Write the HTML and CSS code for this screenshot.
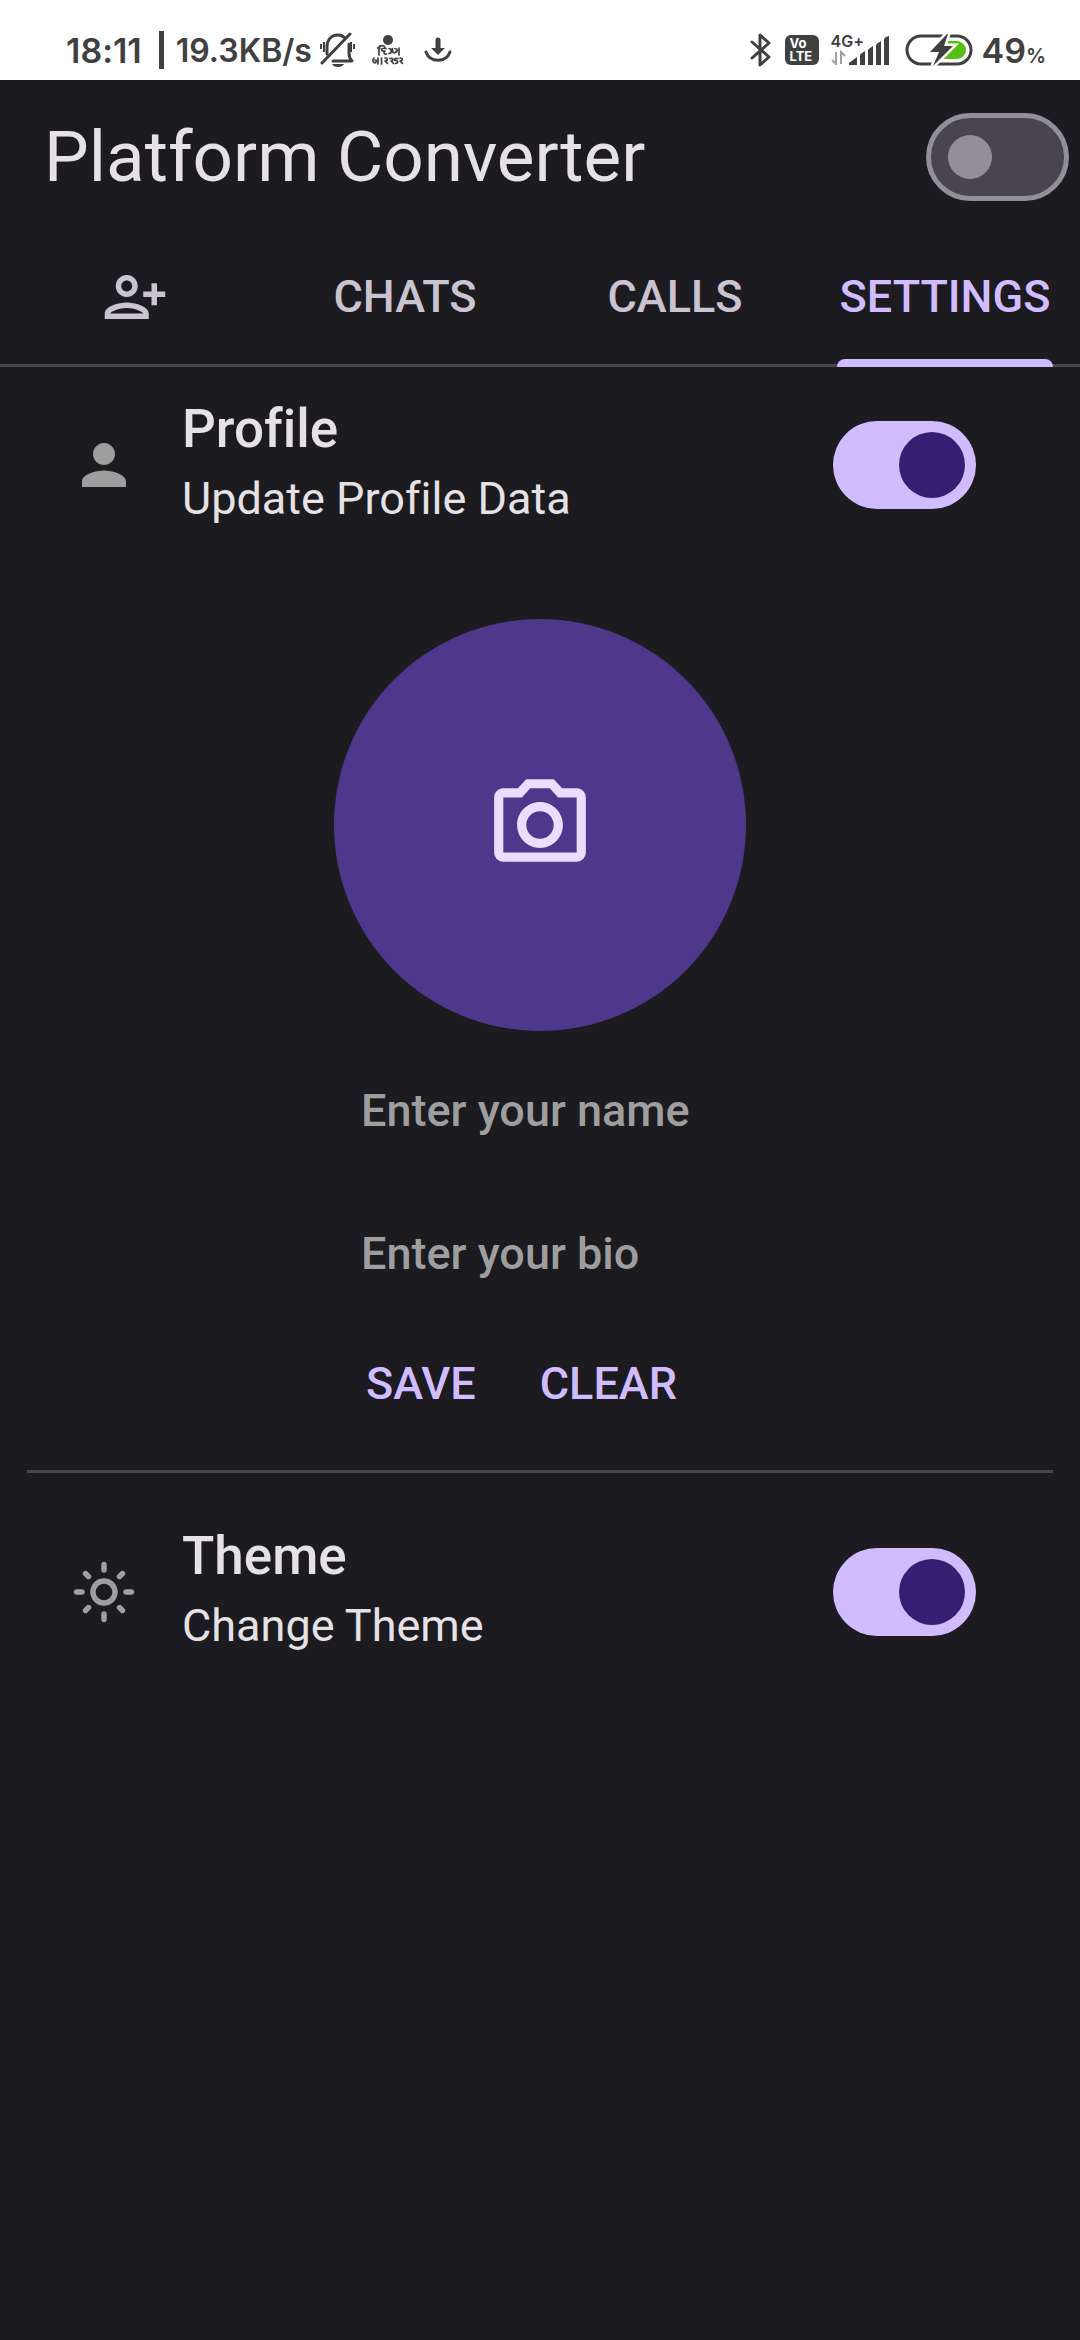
FILE: index.html
```html
<!DOCTYPE html>
<html lang="en">
<head>
<meta charset="utf-8">
<meta name="viewport" content="width=device-width, initial-scale=1">
<title>Platform Converter</title>
<link rel="stylesheet" href="styles.css">
</head>
<body>
<div class="status">
  <div class="status-group">
    <span class="clock">18:11</span>
    <span class="status-bar"></span>
    <span class="speed">19.3KB/s</span>
    <svg class="icon-bell" viewBox="0 0 36 36" width="36" height="36" aria-hidden="true">
      <g fill="none" stroke="#404040" stroke-width="3" stroke-linecap="round" stroke-linejoin="round">
        <path d="M7 22V15C7 8 11 3 18 3c3 0 5 1 7 3"/>
        <path d="M29 12v9c0 4 1 6 3 8H13"/>
        <path d="M30 2L2 31"/>
      </g>
      <path d="M12 32h12c-1 2-3 3-6 3s-5-1-6-3z" fill="#404040"/>
      <path d="M1 12v5M4 10v10M31 10v10M34 12v5" stroke="#404040" stroke-width="2"/>
    </svg>
    <svg class="icon-news" viewBox="0 0 32 32" width="32" height="32" aria-hidden="true">
      <circle cx="16" cy="6" r="5" fill="#404040"/>
      <g fill="none" stroke="#404040" stroke-width="1.7" stroke-linecap="round" stroke-linejoin="round">
        <path d="M7 21v-7c0-3 5-3 6-.5M5.500 14H8M14 14.500h-3c-2 0-2 2.500 0 2.500h2c-2 1-1 3.500 1.500 3M17 14.500c3 0 3 5 0 5M20.500 14.500v2c0 3 3 3 4 .5M23 14.500c2 0 3 2 1.500 3.500M27 14v7"/>
        <path d="M2 24c-2 2-1 5 1 5 1.500 0 1.500-3 0-3M6 24v6M3.500 26.500H6M9.500 24v6M13 24c3 0 3 3 0 3l2.500 2.500M18 24.500c4-1 3 2.500 1 2.500M19.500 27l2 2.500M26 24.500h-3c-1 2 0 2 1.500 2s1.500 3-1 3M28 24c3 0 3 3 0 3l2.500 2.500"/>
      </g>
    </svg>
    <svg class="icon-download" viewBox="0 0 28 26" width="28" height="26" aria-hidden="true">
      <path d="M14 3v9" stroke="#404040" stroke-width="5" stroke-linecap="round"/>
      <path d="M7 11h14l-7 7z" fill="#404040"/>
      <path d="M2 15c4 11 20 11 24 0" fill="none" stroke="#404040" stroke-width="3" stroke-linecap="round"/>
    </svg>
  </div>
  <div class="status-group">
    <svg class="icon-bluetooth" viewBox="0 0 22 34" width="22" height="34" aria-hidden="true">
      <path d="M2 9l17 15-9 8V2l9 8L2 25" fill="none" stroke="#404040" stroke-width="3" stroke-linecap="round" stroke-linejoin="round"/>
    </svg>
    <span class="volte"><span>Vo</span><span>LTE</span></span>
    <span class="signal">
      <span class="network">4G+</span>
      <svg viewBox="0 0 60 30" width="60" height="30" aria-hidden="true">
        <path d="M5 17v12l-4-4M10 29V17l4 4" fill="none" stroke="#a0a0a0" stroke-width="2"/>
        <path d="M18 30v-2l8-6v8zM29 30V20q0-1 5-4v14zM37 30V15q0-1 5-4v19zM45 30V10q0-1 5-4v24zM53 30V5q0-3 5-4v29z" fill="#404040"/>
      </svg>
    </span>
    <svg class="icon-battery" viewBox="0 0 68 32" width="68" height="32" aria-hidden="true">
      <rect x="2" y="2" width="64" height="28" rx="14" fill="none" stroke="#404040" stroke-width="3"/>
      <path d="M42 7h10a9 9 0 0 1 0 18H37z" fill="#56c012"/>
      <path class="bolt" d="M42 0L25 18h9l-6 14 20-20h-9l4-12z"/>
    </svg>
    <span class="level">49<small>%</small></span>
  </div>
</div>

<header class="app-bar">
  <h1>Platform Converter</h1>
  <input class="switch" type="checkbox" role="switch" aria-label="Switch platform">
</header>

<nav class="tabs">
  <a class="tab" href="#add" aria-label="Add contact">
    <svg class="icon" viewBox="0 0 24 24" aria-hidden="true"><path d="M13 8c0-2.21-1.79-4-4-4S5 5.79 5 8s1.79 4 4 4 4-1.79 4-4zm-2 0c0 1.1-.9 2-2 2s-2-.9-2-2 .9-2 2-2 2 .9 2 2zM1 18v2h16v-2c0-2.66-5.33-4-8-4s-8 1.34-8 4zm2 0c.2-.71 3.3-2 6-2 2.69 0 5.78 1.28 6 2H3zm17-3v-3h3v-2h-3V7h-2v3h-3v2h3v3h2z"/></svg>
  </a>
  <a class="tab" href="#chats">CHATS</a>
  <a class="tab" href="#calls">CALLS</a>
  <a class="tab" href="#settings" aria-current="page"><span class="tab-label">SETTINGS</span></a>
</nav>

<main>
  <section class="setting">
    <svg class="icon" viewBox="0 0 24 24" aria-hidden="true"><path d="M12 12c2.21 0 4-1.79 4-4s-1.79-4-4-4-4 1.79-4 4 1.79 4 4 4zm0 2c-2.67 0-8 1.34-8 4v2h16v-2c0-2.66-5.33-4-8-4z"/></svg>
    <label class="setting-text" for="profile-switch">
      <span class="setting-title">Profile</span>
      <span class="setting-note">Update Profile Data</span>
    </label>
    <input class="switch" id="profile-switch" type="checkbox" role="switch" checked>
  </section>

  <form class="profile">
    <button class="avatar" type="button" aria-label="Choose a photo">
      <svg viewBox="0 0 24 24" aria-hidden="true"><path d="M14.12 4l1.83 2H20v12H4V6h4.05l1.83-2h4.24M15 2H9L7.17 4H4c-1.1 0-2 .9-2 2v12c0 1.1.9 2 2 2h16c1.1 0 2-.9 2-2V6c0-1.1-.9-2-2-2h-3.17L15 2zm-3 7c1.65 0 3 1.35 3 3s-1.35 3-3 3-3-1.35-3-3 1.35-3 3-3m0-2c-2.76 0-5 2.24-5 5s2.24 5 5 5 5-2.24 5-5-2.24-5-5-5z"/></svg>
    </button>
    <input class="field" type="text" placeholder="Enter your name" aria-label="Enter your name">
    <input class="field" type="text" placeholder="Enter your bio" aria-label="Enter your bio">
    <div class="actions">
      <button class="action" type="button">SAVE</button>
      <button class="action" type="reset">CLEAR</button>
    </div>
  </form>

  <hr class="divider">

  <section class="setting">
    <svg class="icon" viewBox="0 0 24 24" aria-hidden="true">
      <path d="M12 9c1.65 0 3 1.35 3 3s-1.35 3-3 3-3-1.35-3-3 1.35-3 3-3m0-2c-2.76 0-5 2.24-5 5s2.24 5 5 5 5-2.24 5-5-2.24-5-5-5z"/>
      <path class="rays" d="M2 12h2M20 12h2M12 2v2M12 20v2M5.29 5.29l1.05 1.05M17.66 17.66l1.05 1.05M5.29 18.71l1.05-1.05M17.66 6.34l1.05-1.05"/>
    </svg>
    <label class="setting-text" for="theme-switch">
      <span class="setting-title">Theme</span>
      <span class="setting-note">Change Theme</span>
    </label>
    <input class="switch" id="theme-switch" type="checkbox" role="switch" checked>
  </section>
</main>
</body>
</html>
```
FILE: styles.css
```css
* {
  box-sizing: border-box;
}

body {
  margin: 0;
  min-height: 100vh;
  background: #1c1b1f;
  color: #e6e1e5;
  font-family: Roboto, sans-serif;
  font-size: 45px;
  font-variant-ligatures: none;
}

/* Status bar */

.status {
  display: flex;
  justify-content: space-between;
  height: 80px;
  padding: 18px 34px 0 66px;
  background: #fff;
  color: #404040;
  font-family: Inter, sans-serif;
  font-weight: 600;
}

.status-group {
  display: flex;
  align-items: center;
  height: 64px;
}

.clock,
.level {
  font-size: 34px;
}

.status-bar {
  width: 5px;
  height: 38px;
  margin: 0 12px 0 17px;
  background: #404040;
}

.speed {
  font-size: 32px;
}

.icon-bell {
  margin-left: 8px;
}

.icon-news {
  margin-left: 16px;
}

.icon-download {
  margin-left: 20px;
}

.volte {
  display: flex;
  flex-direction: column;
  width: 34px;
  height: 30px;
  margin-left: 13px;
  padding: 2px 0 0 5px;
  border-radius: 6px;
  background: #404040;
  color: #fff;
  font-size: 13px;
  font-weight: 700;
  line-height: 13px;
}

.signal {
  position: relative;
  display: flex;
  margin-left: 12px;
}

.network {
  position: absolute;
  top: -1px;
  left: 0;
  font-size: 16px;
  line-height: 14px;
}

.icon-battery {
  margin-left: 14px;
}

.bolt {
  fill: #404040;
  stroke: #fff;
  stroke-width: 5;
  paint-order: stroke;
}

.level {
  margin-left: 9px;
}

.level small {
  font-size: 20px;
}

/* App bar */

.app-bar {
  display: flex;
  align-items: center;
  justify-content: space-between;
  height: 154px;
  padding: 0 11px 0 44px;
}

h1 {
  margin: 0;
  font-size: 71px;
  font-weight: 400;
  line-height: 88px;
}

.switch {
  appearance: none;
  display: flex;
  align-items: center;
  flex: none;
  width: 143px;
  height: 88px;
  margin: 0;
  padding: 0 17px;
  border: 5px solid #938f99;
  border-radius: 44px;
  background: #49454f;
}

.switch::before {
  content: "";
  width: 44px;
  height: 44px;
  border-radius: 50%;
  background: #938f99;
}

.switch:checked {
  justify-content: flex-end;
  padding: 0 11px;
  border: 0;
  background: #d0bcff;
}

.switch:checked::before {
  width: 66px;
  height: 66px;
  background: #381e72;
}

/* Tabs */

.icon {
  flex: none;
  width: 66px;
  height: 66px;
  fill: currentColor;
}

.tabs {
  display: grid;
  grid-template-columns: repeat(4, 1fr);
  height: 133px;
  border-bottom: 3px solid #49454f;
}

.tab {
  display: flex;
  align-items: center;
  justify-content: center;
  padding-bottom: 5px;
  color: #cac4d0;
  font-weight: 500;
  text-decoration: none;
}

.tab[aria-current] {
  padding-bottom: 0;
  color: #d0bcff;
}

.tab-label {
  position: relative;
  display: flex;
  align-items: center;
  height: 100%;
  padding: 0 3px 5px;
}

.tab-label::after {
  content: "";
  position: absolute;
  right: 0;
  bottom: -3px;
  left: 0;
  height: 8px;
  border-radius: 8px 8px 0 0;
  background: #d0bcff;
}

/* Settings rows */

.setting {
  display: flex;
  align-items: center;
  height: 196px;
  padding: 0 104px 0 71px;
}

.setting .icon {
  color: #9e9e9e;
}

.rays {
  fill: none;
  stroke: currentColor;
  stroke-width: 2;
  stroke-linecap: round;
}

.setting-text {
  display: flex;
  flex: 1;
  flex-direction: column;
  margin-left: 45px;
  padding-bottom: 8px;
}

.setting-title {
  font-size: 53px;
  font-weight: 500;
  line-height: 76px;
}

.setting-note {
  line-height: 64px;
}

/* Profile form */

.profile {
  display: flex;
  flex-direction: column;
  width: 412px;
  margin: 56px auto 29px;
}

.avatar {
  display: flex;
  align-items: center;
  justify-content: center;
  height: 412px;
  margin-bottom: 8px;
  padding: 0;
  border: 0;
  border-radius: 50%;
  background: #4f378b;
  color: #eaddff;
}

.avatar svg {
  width: 110px;
  height: 110px;
  fill: currentColor;
}

.field {
  width: 100%;
  height: 143px;
  padding: 0 0 0 27px;
  border: 0;
  outline: 0;
  background: none;
  color: #e6e1e5;
  font: 500 45px Roboto, sans-serif;
}

.field::placeholder {
  color: #9e9e9e;
}

.actions {
  display: flex;
}

.action {
  height: 116px;
  padding: 0 32px;
  border: 0;
  background: none;
  color: #d0bcff;
  font: 500 45px Roboto, sans-serif;
}

.divider {
  height: 3px;
  margin: 0 27px 21px;
  border: 0;
  background: #49454f;
}
```
